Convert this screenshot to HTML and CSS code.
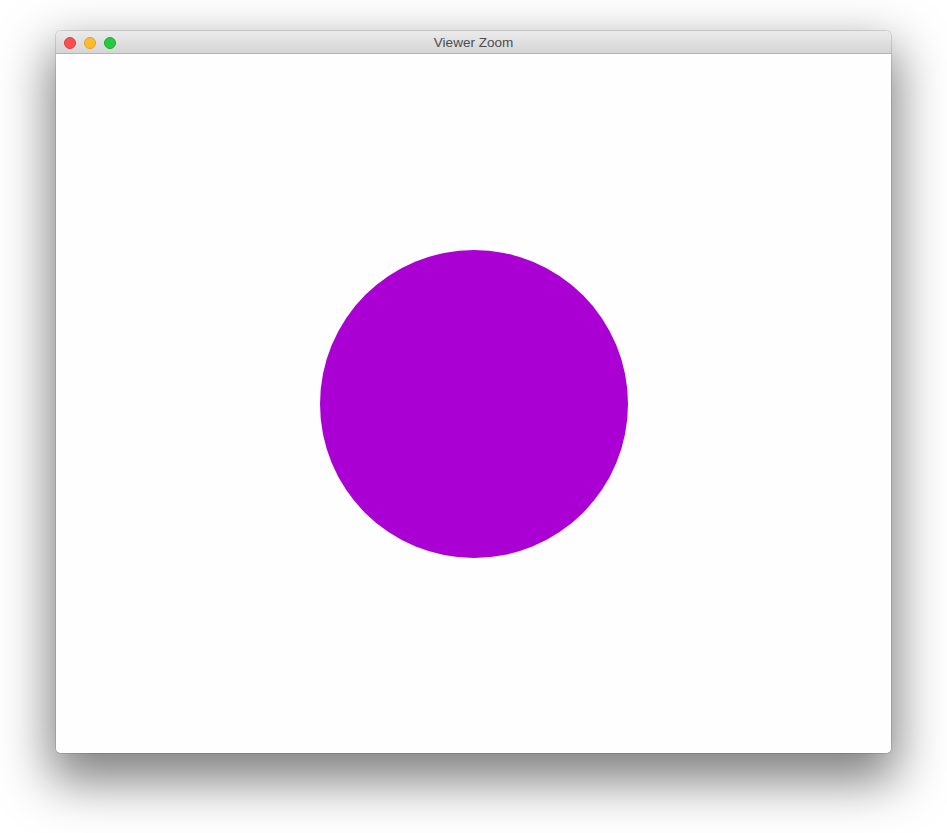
FILE: index.html
```html
<!DOCTYPE html>
<html>
<head>
<meta charset="utf-8">
<link rel="stylesheet" href="styles.css">
</head>
<body>
<div class="window">
  <div class="titlebar">
    <div class="lights">
      <span class="light red"></span>
      <span class="light yellow"></span>
      <span class="light green"></span>
    </div>
    <div class="title">Viewer Zoom</div>
  </div>
  <div class="content">
    <div class="circle"></div>
  </div>
</div>
</body>
</html>
```
FILE: styles.css
```css
html, body {
  margin: 0;
  padding: 0;
  background: #ffffff;
}
body {
  width: 947px;
  height: 833px;
  padding: 31px 0 0 56px;
  box-sizing: border-box;
  overflow: hidden;
}
.window {
  width: 835px;
  height: 722px;
  border-radius: 5px;
  overflow: hidden;
  display: flex;
  flex-direction: column;
  box-shadow: 0 22px 50px 6px rgba(0,0,0,0.5), 0 0 0 1px rgba(0,0,0,0.12);
  background: #fefefe;
}
.titlebar {
  height: 23px;
  flex: none;
  display: flex;
  align-items: center;
  position: relative;
  background: linear-gradient(#ebebeb, #d5d5d5);
  border-bottom: 1px solid #b4b4b4;
  box-sizing: border-box;
  padding-top: 1px;
}
.lights {
  display: flex;
  gap: 8px;
  padding-left: 8px;
  position: relative;
  z-index: 1;
}
.light {
  width: 12px;
  height: 12px;
  border-radius: 50%;
  box-sizing: border-box;
}
.red { background: #fc4f4f; border: 1px solid #df3c3e; }
.yellow { background: #fdbd2d; border: 1px solid #dea123; }
.green { background: #27c93f; border: 1px solid #1eaa2f; }
.title {
  position: absolute;
  left: 0;
  right: 0;
  top: 1px;
  bottom: 0;
  display: flex;
  align-items: center;
  justify-content: center;
  font-family: "Liberation Sans", Arial, sans-serif;
  font-size: 13.5px;
  color: #4d4d4d;
}
.content {
  flex: 1;
  display: flex;
  align-items: center;
  justify-content: center;
  background: #fefefe;
}
.circle {
  width: 308px;
  height: 308px;
  border-radius: 50%;
  background: #aa00d4;
}
```
